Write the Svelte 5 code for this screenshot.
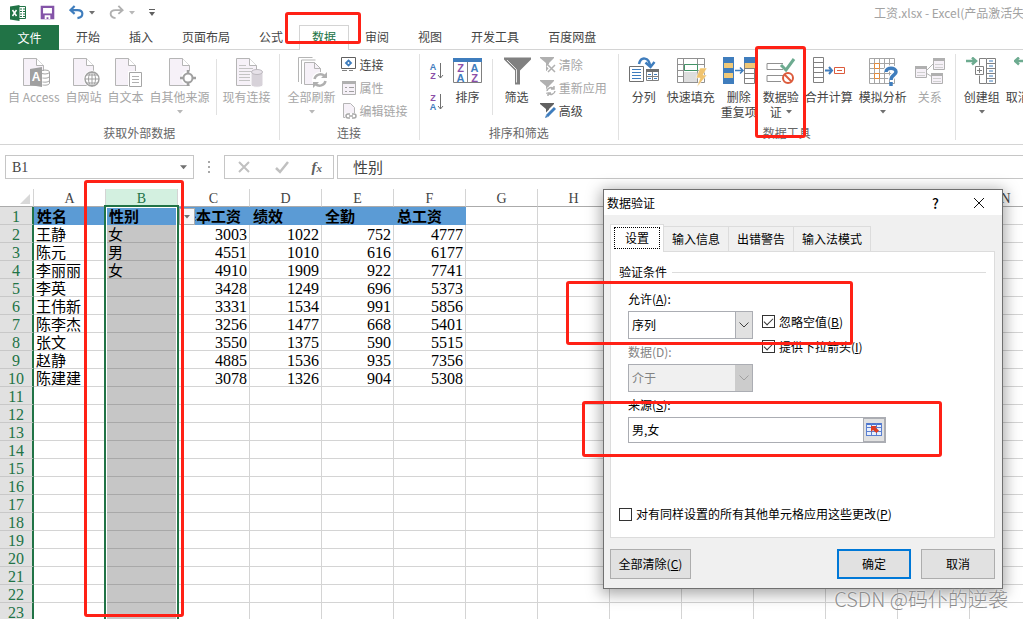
<script lang="ts">
	type Big = { icon: string; label: string; second?: string; arrow?: boolean; off?: boolean };

	const tabs = ['开始', '插入', '页面布局', '公式', '数据', '审阅', '视图', '开发工具', '百度网盘'];
	const columns = 'ABCDEFGHIJKLMN'.split('');
	const titles = ['姓名', '性别', '基本工资', '绩效', '全勤', '总工资'];
	const people = [
		['王静', '女', 3003, 1022, 752, 4777],
		['陈元', '男', 4551, 1010, 616, 6177],
		['李丽丽', '女', 4910, 1909, 922, 7741],
		['李英', '', 3428, 1249, 696, 5373],
		['王伟新', '', 3331, 1534, 991, 5856],
		['陈李杰', '', 3256, 1477, 668, 5401],
		['张文', '', 3550, 1375, 590, 5515],
		['赵静', '', 4885, 1536, 935, 7356],
		['陈建建', '', 3078, 1326, 904, 5308],
	];
	const rows = Array.from({ length: 23 }, (_, i) => (i === 0 ? titles : (people[i - 1] ?? [])));

	const external: Big[] = [
		{ icon: 'access', label: '自 Access', off: true },
		{ icon: 'web', label: '自网站', off: true },
		{ icon: 'text', label: '自文本', off: true },
		{ icon: 'other', label: '自其他来源', arrow: true, off: true },
	];
	const tools: Big[] = [
		{ icon: 'split', label: '分列' },
		{ icon: 'flash', label: '快速填充' },
		{ icon: 'dedupe', label: '删除', second: '重复项' },
		{ icon: 'validate', label: '数据验', second: '证', arrow: true },
		{ icon: 'merge', label: '合并计算' },
		{ icon: 'whatif', label: '模拟分析', arrow: true },
		{ icon: 'relation', label: '关系', off: true },
	];

	let activeTab = $state('数据');
	let allow = $state('序列');
	let source = $state('男,女');
	let ignoreBlank = $state(true);
	let dropdown = $state(true);
	let applyAll = $state(false);
</script>

{#snippet doc()}
	<path d="M5.5 1.5h13l7 7v20h-20z" fill="#f6f1f8" stroke="#b5b5b5" />
	<path d="M18.5 1.5v7h7" fill="#fff" stroke="#b5b5b5" />
{/snippet}

{#snippet icon(name: string)}
	<svg class="icon" viewBox="0 0 32 32" fill="none" aria-hidden="true">
		{#if name === 'access'}
			{@render doc()}
			<path d="M22 14h7c3 0 3 2 3 2v11c0 2-3 2-3 2h-7z" fill="#fff" />
			<ellipse cx="27" cy="15" rx="4.5" ry="2" stroke="#a6a6a6" />
			<path d="M31.5 15v11c0 2-4 2.500-7 2M31.500 19c0 2-4 2.500-7 2M31.500 23c0 2-4 2.500-7 2" stroke="#a6a6a6" />
			<path d="M12 12l12-2v20l-12-2z" fill="#a0a0a0" />
			<text x="18" y="24" text-anchor="middle" class="glyph" fill="#fff">A</text>
		{:else if name === 'web'}
			{@render doc()}
			<circle cx="24" cy="22" r="8.500" fill="#fff" />
			<circle cx="24" cy="22" r="7" stroke="#a0a0a0" stroke-width="1.400" />
			<ellipse cx="24" cy="22" rx="3.500" ry="7" stroke="#a0a0a0" />
			<path d="M17 22h14M24 15v14M18.500 18h11M18.500 26h11" stroke="#a0a0a0" />
		{:else if name === 'text'}
			{@render doc()}
			<path d="M18 14h14v18h-14z" fill="#fff" />
			<path d="M19.500 15.500h12v14h-12z" fill="#fff" stroke="#a6a6a6" />
			<path d="M22 19.500h7M22 22.500h7M22 25.500h7" stroke="#b0b0b0" />
		{:else if name === 'other'}
			{@render doc()}
			<circle cx="24" cy="21" r="7" fill="#fff" />
			<circle cx="24" cy="21" r="4.500" fill="#fff" stroke="#a0a0a0" stroke-width="2" />
			<path d="M24 13v4M24 25v4M16 21h4M28 21h4" stroke="#a0a0a0" stroke-width="2.500" />
		{:else if name === 'existing'}
			{@render doc()}
			<path d="M8 8.500h7M8 11.500h14M8 14.500h14M8 17.500h11M8 20.500h11M8 23.500h11" stroke="#c4c4c4" />
			<path d="M20 15v13c0 3 12 3 12 0v-13z" fill="#d7d2d9" stroke="#fff" />
			<ellipse cx="26" cy="15" rx="5.500" ry="2.500" fill="#e7e2e9" stroke="#bdb9bf" />
		{:else if name === 'refresh'}
			<path d="M2.500 25v-24.500h14M5.500 27v-24h14" stroke="#b5b5b5" />
			<path d="M8.500 5.500h10l6 6v16h-16z" fill="#f6f1f8" stroke="#b5b5b5" />
			<path d="M18.500 5.500v6h6" stroke="#b5b5b5" />
			<circle cx="24" cy="23" r="8" fill="#fff" />
			<path d="M18.500 22a6 6 0 0 1 10-3M29.500 24a6 6 0 0 1-10 3" stroke="#b0b0b0" stroke-width="2.500" />
			<path d="M31 15v6h-6zM17 31v-6h6z" fill="#b0b0b0" />
		{:else if name === 'sort'}
			<path d="M1.500 2.500h28v23h-28z" fill="#fff" stroke="#808080" />
			<path d="M1 1h29v4h-29z" fill="#3f7dbd" />
			<path d="M15.500 5v20" stroke="#808080" />
			<g class="glyph small" text-anchor="middle">
				<text x="8.500" y="14.500" fill="#8b4fa8">Z</text>
				<text x="8.500" y="24.500" fill="#3f7dbd">A</text>
				<text x="22.500" y="14.500" fill="#3f7dbd">A</text>
				<text x="22.500" y="24.500" fill="#8b4fa8">Z</text>
			</g>
		{:else if name === 'filter'}
			<path d="M3 0.500h27v2l-11 11v14h-5v-14l-11-11z" fill="#808080" />
			<path d="M6 3l9.500 9.500v13" stroke="#e8e8e8" />
		{:else if name === 'split'}
			<path d="M11 7c2-8 10-7 11 2" stroke="#3f7dbd" stroke-width="2.500" />
			<path d="M17.500 5.500l5 4.500 4-5" stroke="#3f7dbd" stroke-width="2.500" />
			<path d="M1.500 9.500h14v15h-14z" fill="#fff" stroke="#707070" />
			<path d="M4 12.500h9M4 15.500h9M4 18.500h9M4 21.500h9" stroke="#3f7dbd" />
			<path d="M18.500 12.500h12v11h-12zM24.500 15v8M18 19.500h13" stroke="#808080" fill="#fff" />
			<path d="M18 12h13v3h-13z" fill="#707070" />
			<path d="M20 17.500h3M26 17.500h3M20 21.500h3M26 21.500h3" stroke="#3f7dbd" />
		{:else if name === 'flash'}
			<path d="M2.500 1.500h27v24h-27zM2 7.500h28M2 13.500h28M2 19.500h28M8.500 1v24M22.500 1v24" stroke="#909090" />
			<path d="M9.500 7.500h13v6h-13z" fill="#fff" stroke="#439467" />
			<path d="M9 15h13v10h-13z" fill="#dedede" />
			<path d="M25 11h7l-4 7h4l-10 12 3-9h-4z" fill="#f0c36d" stroke="#fff" stroke-width=".5" />
		{:else if name === 'dedupe'}
			<path d="M0 0h11v27h-11z" fill="#3f7dbd" />
			<path d="M1 6h9v5h-9zM1 16h9v5h-9z" fill="#f0c978" />
			<path d="M12 13.500h8M17 10.500l3 3-3 3" stroke="#3f7dbd" stroke-width="1.500" />
			<path d="M21.500 0.500h10v26h-10zM21 11.500h11M21 16.500h11M21 21.500h11" stroke="#808080" fill="#fff" />
			<path d="M21 0h11v6h-11z" fill="#3f7dbd" />
			<path d="M22 6h10v5h-10z" fill="#f0c978" />
		{:else if name === 'validate'}
			<path d="M18 6.500h-16v6h16M18 18.500h-16v6h14" stroke="#909090" />
			<path d="M16 8l5 5 8-11" stroke="#6dab90" stroke-width="3" />
			<circle cx="23" cy="21" r="5" stroke="#dc5b3c" stroke-width="2" />
			<path d="M19.500 17.500l7 7" stroke="#dc5b3c" stroke-width="2" />
		{:else if name === 'merge'}
			<path d="M.500 .500h10v25h-10zM0 5.500h11M0 10.500h11M0 15.500h11M0 20.500h11" stroke="#808080" />
			<path d="M12 13.500h7M16 10l3 3.500-3 3.500" stroke="#3f7dbd" stroke-width="2" />
			<path d="M21.500 10.500h10v6h-10zM24 13.500h5" stroke="#dc5b3c" />
		{:else if name === 'whatif'}
			<path d="M2.500 1.500h25v25h-25zM2 6.500h26M2 11.500h26M2 16.500h26M2 21.500h26M7.500 1v25M12.500 1v25M17.500 1v25M22.500 1v25" stroke="#a5a5a5" />
			<path d="M7.500 6.500h5v5h-5zM7.500 16.500h5v5h-5z" fill="#fff" stroke="#e28a3b" />
			<path d="M19 15c0-5 10-5 10 0 0 3-5 3-5 8" stroke="#fff" stroke-width="6" />
			<path d="M19 15c0-5 10-5 10 0 0 3-5 3-5 8M24 25v4" stroke="#3f7dbd" stroke-width="3.500" />
		{:else if name === 'relation'}
			<path d="M12 14l8-8M12 16l8 5" stroke="#b5b5b5" />
			<path d="M1.500 9.500h11v11h-11zM19.500 1.500h11v11h-11zM17.500 17.500h11v9h-11z" fill="#f6f1f8" stroke="#b0b0b0" />
			<path d="M1 9h12v3h-12zM19 1h12v3h-12zM17 16h12v3h-12z" fill="#b0b0b0" />
			<path d="M3 15.500h8M3 18.500h8M21 7.500h8M21 10.500h8M19 21.500h8M19 24.500h8" stroke="#d0d0d0" />
		{:else if name === 'group'}
			<path d="M0 4h10M6 .500l4 3.500-4 3.500" stroke="#6dab90" stroke-width="2.500" />
			<path d="M20 1.500h-6.500v7M20 26.500h-6.500v-8M9.500 9.500h8v8h-8zM11 13.500h5M13.500 11v5" stroke="#808080" />
			<path d="M20.500 1.500h9v25h-9zM20 6.500h10M20 11.500h10M20 16.500h10M20 21.500h10" stroke="#808080" />
			<path d="M23 4h4M23 9h4M23 14h4M23 19h4M23 24h4" stroke="#3f7dbd" />
		{:else if name === 'ungroup'}
			<path d="M10 4h-9M5 .500l-4 3.500 4 3.500" stroke="#6dab90" stroke-width="2.500" />
			<path d="M9.500 10.500h8v8h-8z" stroke="#dc5b3c" />
		{/if}
	</svg>
{/snippet}

{#snippet smallIcon(name: string)}
	<svg class="small-icon" viewBox="0 0 16 16" fill="none" aria-hidden="true">
		{#if name === 'link'}
			<path d="M.500 .500h14v11h-14z" stroke="#606060" />
			<path d="M7.500 3.500l2.500 2.500-2.500 2.500-2.500-2.500z" stroke="#3f7dbd" stroke-width="1.800" />
			<path d="M1 13.500h5M8 13.500h4" stroke="#808080" />
		{:else if name === 'props'}
			<path d="M1.500 1.500h13v13h-13z" fill="#f6f1f8" stroke="#b0b0b0" />
			<path d="M1 1h14v3h-14z" fill="#b0b0b0" />
			<path d="M4 7.500h2M8 7.500h5M4 11.500h2M8 11.500h5" stroke="#a0a0a0" />
		{:else if name === 'edit'}
			<path d="M2.500 .500h7l4 4v10h-11z" fill="#f6f1f8" stroke="#b5b5b5" />
			<path d="M4 10h12v6h-12z" fill="#fff" />
			<path d="M9 11h-2a2 2 0 0 0 0 4h2M11 11h2a2 2 0 0 1 0 4h-2M8 13h4" stroke="#a8a8a8" stroke-width="1.500" />
		{:else if name === 'asc' || name === 'desc'}
			<g class="glyph tiny" text-anchor="middle">
				<text x="4" y="7" fill={name === 'asc' ? '#3f7dbd' : '#8b4fa8'}>{name === 'asc' ? 'A' : 'Z'}</text>
				<text x="4" y="15.500" fill={name === 'asc' ? '#8b4fa8' : '#3f7dbd'}>{name === 'asc' ? 'Z' : 'A'}</text>
			</g>
			<path d="M11.500 0v15M9 12l2.500 3 2.500-3" stroke="#707070" />
		{:else}
			<path d="M0 0h14v1l-5 5v8h-3v-8l-6-5z" fill={name === 'advanced' ? '#606060' : '#b0b0b0'} />
			{#if name === 'clear'}
				<path d="M8 8l7 7M15 8l-7 7" stroke="#fff" stroke-width="4" />
				<path d="M8 8l7 7M15 8l-7 7" stroke="#b0b0b0" stroke-width="1.500" />
			{:else if name === 'reapply'}
				<circle cx="11" cy="11" r="5" fill="#fff" />
				<path d="M7 11a4 4 0 0 1 7-2M15 11a4 4 0 0 1-7 2M14 6v3h-3M8 16v-3h3" stroke="#b0b0b0" stroke-width="1.500" />
			{:else}
				<path d="M14 5l-9 9" stroke="#fff" stroke-width="5" />
				<path d="M15 5l-8 8" stroke="#3f7dbd" stroke-width="3" />
				<path d="M5 15l1-3 2 2z" fill="#3f7dbd" />
			{/if}
		{/if}
	</svg>
{/snippet}

{#snippet caret()}
	<svg class="caret" viewBox="0 0 6 4" aria-hidden="true"><path d="M0 0h6l-3 3.500z" /></svg>
{/snippet}

{#snippet big(b: Big)}
	<button class="big" disabled={b.off}>
		{@render icon(b.icon)}
		<span>{b.label}</span>
		{#if b.second || b.arrow}
			<span class="line">
				{b.second ?? ''}
				{#if b.arrow}{@render caret()}{/if}
			</span>
		{/if}
	</button>
{/snippet}

{#snippet small(name: string, label: string, off = false)}
	<button class="small-button" disabled={off}>
		{@render smallIcon(name)}
		<span>{label}</span>
	</button>
{/snippet}

<div class="app">
	<header class="titlebar">
		<svg class="excel" viewBox="0 0 16 16" aria-hidden="true">
			<path d="M8 1.500h7.500v12h-7.500" fill="#fff" stroke="#217346" />
			<path d="M10 4h2M13 4h2M10 6.500h2M13 6.500h2M10 9h2M13 9h2M10 11.500h2M13 11.500h2" stroke="#217346" />
			<path d="M0 1.500l9.500-1.500v16l-9.500-1.500z" fill="#217346" />
			<path d="M2.500 5l4 6M6.500 5l-4 6" stroke="#fff" stroke-width="1.500" />
		</svg>
		<button class="quick" aria-label="保存">
			<svg viewBox="0 0 16 16" fill="none">
				<path d="M2 2h12v12h-12z" stroke="#8454a8" stroke-width="2.500" />
				<path d="M2 9h12v5h-12z" fill="#8454a8" />
				<path d="M5 11h6v4h-2v-2h-2v2h-2z" fill="#fff" />
			</svg>
		</button>
		<button class="quick" aria-label="撤消">
			<svg viewBox="0 0 16 16" fill="none">
				<path d="M2 5.500h7c7 0 7 7.500 0 8.500M6 1l-4.500 4.500 4.500 4" stroke="#3f7dbd" stroke-width="2.300" />
			</svg>
			{@render caret()}
		</button>
		<button class="quick faded" aria-label="恢复">
			<svg viewBox="0 0 16 16" fill="none">
				<path d="M14 5.500h-7c-7 0-7 7.500 0 8.500M10 1l4.500 4.500-4.500 4" stroke="#b0b0b0" stroke-width="2" />
			</svg>
			{@render caret()}
		</button>
		<button class="quick" aria-label="自定义快速访问工具栏">
			<svg class="customize" viewBox="0 0 6 8"><path d="M0 0h6v1h-6zM0 3h6l-3 4z" fill="#606060" /></svg>
		</button>
		<h1>工资.xlsx - Excel(产品激活失败)</h1>
	</header>

	<nav class="tabs">
		<button class="file">文件</button>
		{#each tabs as tab}
			<button class={['tab', { active: tab === activeTab }]} onclick={() => (activeTab = tab)}>{tab}</button>
		{/each}
	</nav>

	<section class="ribbon">
		<div class="group">
			<div class="items">
				{#each external as b}{@render big(b)}{/each}
				<span class="separator"></span>
				{@render big({ icon: 'existing', label: '现有连接', off: true })}
			</div>
			<p>获取外部数据</p>
		</div>
		<div class="group">
			<div class="items">
				{@render big({ icon: 'refresh', label: '全部刷新', arrow: true, off: true })}
				<div class="stack">
					{@render small('link', '连接')}
					{@render small('props', '属性', true)}
					{@render small('edit', '编辑链接', true)}
				</div>
			</div>
			<p>连接</p>
		</div>
		<div class="group">
			<div class="items sorting">
				<div class="orders">
					<button aria-label="升序">{@render smallIcon('asc')}</button>
					<button aria-label="降序">{@render smallIcon('desc')}</button>
				</div>
				{@render big({ icon: 'sort', label: '排序' })}
				<span class="separator"></span>
				{@render big({ icon: 'filter', label: '筛选' })}
				<div class="stack">
					{@render small('clear', '清除', true)}
					{@render small('reapply', '重新应用', true)}
					{@render small('advanced', '高级')}
				</div>
			</div>
			<p>排序和筛选</p>
		</div>
		<div class="group">
			<div class="items">
				{#each tools as b}{@render big(b)}{/each}
			</div>
			<p>数据工具</p>
		</div>
		<div class="group">
			<div class="items">
				{@render big({ icon: 'group', label: '创建组', arrow: true })}
				{@render big({ icon: 'ungroup', label: '取消组合', arrow: true })}
			</div>
		</div>
	</section>

	<section class="formula-bar">
		<div class="name-box">
			<input aria-label="名称框" value="B1" />
			{@render caret()}
		</div>
		<svg class="grip" viewBox="0 0 3 12" aria-hidden="true">
			<path d="M0 0h2v2h-2zM0 5h2v2h-2zM0 10h2v2h-2z" fill="#a8a8a8" />
		</svg>
		<div class="entry">
			<button aria-label="取消输入">
				<svg viewBox="0 0 16 16" fill="none"><path d="M3 3l10 10M13 3l-10 10" stroke="#c0c0c0" stroke-width="2" /></svg>
			</button>
			<button aria-label="输入">
				<svg viewBox="0 0 16 16" fill="none"><path d="M2 9l4 4 8-10" stroke="#c0c0c0" stroke-width="2.500" /></svg>
			</button>
			<button class="fx">f<sub>x</sub></button>
		</div>
		<input class="formula" aria-label="编辑栏" value="性别" />
	</section>

	<section class="sheet">
		<table>
			<thead>
				<tr>
					<th class="corner"><svg viewBox="0 0 12 12"><path d="M11 1v10h-10z" fill="#d8d8d8" /></svg></th>
					{#each columns as c}
						<th class={{ picked: c === 'B' }}>{c}</th>
					{/each}
				</tr>
			</thead>
			<tbody>
				{#each rows as row, r}
					<tr>
						<th>{r + 1}</th>
						{#each columns as _, c}
							<td
								class={{
									title: r === 0 && c < 6,
									number: typeof row[c] === 'number',
									selected: r > 0 && c === 1,
								}}>{row[c] ?? ''}</td
							>
						{/each}
					</tr>
				{/each}
			</tbody>
		</table>
		<div class="selection"></div>
		<button class="list-arrow" aria-label="选择性别">{@render caret()}</button>
	</section>

	<div class="dialog" role="dialog" aria-labelledby="dialog-title">
		<header>
			<h2 id="dialog-title">数据验证</h2>
			<button class="help" aria-label="帮助">?</button>
			<button aria-label="关闭">
				<svg viewBox="0 0 12 12"><path d="M1 1l10 10M11 1l-10 10" stroke="#111" /></svg>
			</button>
		</header>
		<div class="body">
			<div class="pages">
				<button class="current"><span>设置</span></button>
				<button>输入信息</button>
				<button>出错警告</button>
				<button>输入法模式</button>
			</div>
			<div class="panel">
				<h3>验证条件</h3>
				<div class="fields">
					<div class="column">
						<label for="allow">允许(<u>A</u>):</label>
						<div class="select">
							<select id="allow" bind:value={allow}>
								<option>任何值</option>
								<option>序列</option>
							</select>
							<svg viewBox="0 0 10 6"><path d="M.500 .500l4.500 4.500 4.500-4.500" /></svg>
						</div>
						<label class="muted" for="data">数据(D):</label>
						<div class="select muted">
							<select id="data" disabled><option>介于</option></select>
							<svg viewBox="0 0 10 6"><path d="M.500 .500l4.500 4.500 4.500-4.500" /></svg>
						</div>
						<label for="source">来源(<u>S</u>):</label>
					</div>
					<div class="checks">
						<label class="check"><input type="checkbox" bind:checked={ignoreBlank} />忽略空值(<u>B</u>)</label>
						<label class="check"><input type="checkbox" bind:checked={dropdown} />提供下拉箭头(<u>I</u>)</label>
					</div>
				</div>
				<div class="source">
					<input id="source" bind:value={source} />
					<button aria-label="选择区域">
						<svg viewBox="0 0 16 14" fill="none">
							<path d="M0 0h16v13h-16z" fill="#e8effc" />
							<path d="M0 1h16" stroke="#4d75cd" stroke-width="2" />
							<path d="M0 4.500h16M0 8.500h16M0 12.500h16M.500 0v13M5.500 0v13M10.500 0v13M15.500 0v13" stroke="#5a7fd0" />
							<path d="M5 3h6l-1.500 1.500 3.500 3-2.500 2.500-3.500-3-2 2z" fill="#dc3b22" />
						</svg>
					</button>
				</div>
				<label class="check apply">
					<input type="checkbox" bind:checked={applyAll} />对有同样设置的所有其他单元格应用这些更改(<u>P</u>)
				</label>
			</div>
			<footer>
				<button class="clear">全部清除(<u>C</u>)</button>
				<button class="primary">确定</button>
				<button>取消</button>
			</footer>
		</div>
	</div>

	<div class="mark mark-tab"></div>
	<div class="mark mark-tool"></div>
	<div class="mark mark-column"></div>
	<div class="mark mark-allow"></div>
	<div class="mark mark-source"></div>
	<div class="watermark">CSDN @码仆的逆袭</div>
</div>

<style>
	:global(body) {
		margin: 0;
	}

	.app {
		--green: #217346;
		--line: #d4d4d4;
		--ui: 'Noto Sans CJK SC', 'Liberation Sans', sans-serif;
		--cell: 'Liberation Serif', 'Noto Sans CJK SC', serif;

		position: relative;
		display: flex;
		flex-direction: column;
		height: 100vh;
		overflow: hidden;
		background: #fff;
		color: #444;
		font: 12px/16px var(--ui);
	}

	.app * {
		box-sizing: border-box;
	}

	button,
	input,
	select {
		margin: 0;
		padding: 0;
		border: 0;
		border-radius: 0;
		outline: 0;
		background: none;
		color: inherit;
		font: inherit;
	}

	h1,
	h2,
	h3,
	p {
		margin: 0;
		font: inherit;
	}

	svg {
		display: block;
		flex: none;
	}

	.caret {
		width: 6px;
		height: 4px;
		fill: #707070;
	}

	/* Title bar */
	.titlebar {
		display: flex;
		flex: none;
		align-items: center;
		gap: 14px;
		height: 25px;
		padding-left: 10px;
	}

	.excel {
		width: 16px;
		height: 16px;
	}

	.quick {
		display: flex;
		align-items: center;
		gap: 5px;
	}

	.quick svg:first-child {
		width: 15px;
		height: 15px;
	}

	.quick .customize:first-child {
		width: 6px;
		height: 8px;
	}

	.faded .caret {
		fill: #b8b8b8;
	}

	.titlebar h1 {
		width: 149px;
		margin-left: auto;
		overflow: hidden;
		color: #a2a2a2;
		white-space: nowrap;
	}

	/* Tabs */
	.tabs {
		display: flex;
		flex: none;
		gap: 3px;
		height: 25px;
		padding-bottom: 1px;
		border-bottom: 1px solid var(--line);
	}

	.file {
		width: 59px;
		height: 25px;
		margin-right: 1px;
		background: var(--green);
		color: #fff;
	}

	.tab {
		height: 25px;
		padding: 0 12px 2px;
		border: 1px solid transparent;
		border-bottom: 0;
	}

	.tab.active {
		border-color: var(--line);
		background: #fff;
		color: var(--green);
	}

	/* Ribbon */
	.ribbon {
		display: flex;
		flex: none;
		height: 95px;
		border-bottom: 1px solid var(--line);
	}

	.group {
		display: flex;
		flex: none;
		flex-direction: column;
		justify-content: space-between;
		margin: 4px 0;
		padding: 0 5px;
		border-right: 1px solid #e1e1e1;
	}

	.group p {
		color: #666;
		line-height: 14px;
		text-align: center;
	}

	.items {
		display: flex;
		padding-top: 3px;
	}

	.sorting {
		gap: 1px;
	}

	.big {
		display: flex;
		flex-direction: column;
		align-items: center;
		min-width: 40px;
		padding: 0 3px;
		line-height: 15px;
		white-space: nowrap;
	}

	.big:disabled,
	.small-button:disabled {
		color: #a6a6a6;
	}

	.big:disabled .caret {
		fill: #b8b8b8;
	}

	.icon {
		width: 32px;
		height: 32px;
	}

	.glyph {
		font: bold 12px 'Liberation Sans', sans-serif;
	}

	.glyph.small {
		font-size: 11px;
	}

	.glyph.tiny {
		font-size: 9px;
	}

	.line {
		display: flex;
		align-items: center;
		gap: 4px;
		height: 15px;
	}

	.separator {
		width: 1px;
		height: 56px;
		margin: 2px 3px 0;
		background: #e1e1e1;
	}

	.stack {
		display: flex;
		flex-direction: column;
		padding: 0 6px 0 2px;
	}

	.small-button {
		display: flex;
		align-items: center;
		gap: 3px;
		height: 23px;
		padding-bottom: 8px;
		white-space: nowrap;
	}

	.small-icon {
		width: 16px;
		height: 16px;
	}

	.orders {
		display: flex;
		flex-direction: column;
		gap: 15px;
		padding: 6px 2px 0 4px;
	}

	/* Formula bar */
	.formula-bar {
		display: flex;
		flex: none;
		align-items: center;
		padding: 10px 0;
		font: 14px/22px var(--cell);
	}

	.formula-bar > * {
		height: 24px;
	}

	.name-box {
		display: flex;
		align-items: center;
		width: 189px;
		margin-left: 5px;
		padding: 0 6px;
		border: 1px solid #c6c6c6;
	}

	.name-box input {
		flex: 1;
		min-width: 0;
		padding-top: 2px;
	}

	.name-box .caret {
		width: 7px;
		height: 5px;
	}

	.formula-bar .grip {
		width: 3px;
		height: 12px;
		margin: 0 13px 0 14px;
	}

	.entry {
		display: flex;
		align-items: center;
		justify-content: space-between;
		width: 110px;
		margin-right: 3px;
		padding: 0 11px;
		border: 1px solid #c6c6c6;
	}

	.entry svg {
		width: 16px;
		height: 16px;
	}

	.fx {
		color: #606060;
		font: italic bold 15px/20px 'Liberation Serif', serif;
	}

	.fx sub {
		font-size: 11px;
		line-height: 1px;
		vertical-align: baseline;
	}

	.formula {
		flex: 1;
		min-width: 0;
		padding: 0 0 2px 15px;
		border: 1px solid #c6c6c6;
		border-right: 0;
		font-size: 15px;
	}

	/* Sheet */
	.sheet {
		position: relative;
		flex: 1;
		min-height: 0;
		overflow: hidden;
	}

	table {
		width: 1042px;
		border-collapse: separate;
		border-spacing: 0;
		table-layout: fixed;
		font: 15px/14px var(--cell);
	}

	th,
	td {
		height: 18px;
		padding: 3px 2px 0;
		overflow: hidden;
		border-right: 1px solid var(--line);
		border-bottom: 1px solid var(--line);
		white-space: nowrap;
	}

	thead th {
		border-bottom-color: #ababab;
		font-size: 14px;
		font-weight: normal;
	}

	thead .picked {
		background: #d3f0e0;
		color: var(--green);
	}

	.corner {
		width: 34px;
	}

	.corner svg {
		width: 12px;
		height: 12px;
		margin-left: auto;
	}

	tbody th {
		border-right: 2px solid var(--green);
		border-bottom-color: #c8c8c8;
		background: #e1e1e1;
		color: var(--green);
		font-size: 16px;
		font-weight: normal;
	}

	td {
		color: #000;
	}

	.number {
		font-size: 16px;
		text-align: right;
	}

	.title {
		padding: 3px 3px 0;
		border-color: #5b9bd5;
		background: #5b9bd5;
		font-weight: bold;
	}

	.selected {
		border-bottom-color: #a8a8a8;
		background: #c6c6c6;
	}

	.selection {
		position: absolute;
		top: 16px;
		left: 104px;
		width: 75px;
		height: 100%;
		border: 2px solid var(--green);
		box-shadow: inset 0 0 0 1px #fff;
	}

	.list-arrow {
		position: absolute;
		top: 19px;
		left: 179px;
		display: grid;
		place-items: center;
		width: 16px;
		height: 17px;
		border: 1px solid #ababab;
		background: #f8f8f8;
	}

	/* Dialog */
	.dialog {
		position: absolute;
		top: 189px;
		left: 603px;
		width: 400px;
		border: 1px solid #707070;
		background: #f0f0f0;
		box-shadow: 0 3px 14px 2px rgb(0 0 0 / 35%);
		color: #000;
	}

	.dialog header {
		display: flex;
		align-items: center;
		gap: 34px;
		height: 25px;
		padding: 0 17px 0 3px;
		background: #fff;
	}

	.dialog h2 {
		flex: 1;
	}

	.dialog header svg {
		width: 12px;
		height: 12px;
	}

	.help {
		font-size: 14px;
		font-weight: 500;
	}

	.body {
		padding: 9px 7px 9px 6px;
	}

	.pages {
		display: flex;
		align-items: flex-end;
	}

	.pages button {
		height: 25px;
		padding: 0 8px;
		border: 1px solid #dcdcdc;
		border-bottom: 0;
		border-left: 0;
	}

	.pages .current {
		height: 28px;
		margin-bottom: -1px;
		padding: 2px 3px 3px;
		border-left: 1px solid #dcdcdc;
		background: #fff;
	}

	.current span {
		display: block;
		padding: 2px 10px;
		border: 1px dotted #000;
	}

	.panel {
		padding: 12px 8px 15px;
		border: 1px solid #dcdcdc;
		background: #fff;
	}

	.panel h3 {
		display: flex;
		align-items: center;
		gap: 5px;
		margin-bottom: 11px;
	}

	.panel h3::after {
		content: '';
		flex: 1;
		border-top: 1px solid #dcdcdc;
	}

	.fields {
		display: flex;
		gap: 9px;
		padding-left: 9px;
	}

	.column {
		display: flex;
		flex-direction: column;
		width: 125px;
	}

	.muted {
		color: #838383;
	}

	.select {
		position: relative;
		margin: 4px 0 5px;
	}

	.select select {
		display: block;
		width: 100%;
		height: 28px;
		padding: 0 20px 0 3px;
		border: 1px solid #abadb3;
		appearance: none;
		background: linear-gradient(90deg, #abadb3 1px, #e1e1e1 1px) right / 17px 100% no-repeat #fff;
		opacity: 1;
	}

	.select.muted select {
		background: linear-gradient(90deg, #ccc, #ccc) right / 17px 100% no-repeat #f0f0f0;
	}

	.select svg {
		position: absolute;
		top: 11px;
		right: 4px;
		width: 10px;
		height: 6px;
		fill: none;
		stroke: #404040;
		pointer-events: none;
	}

	.select.muted svg {
		stroke: #a0a0a0;
	}

	.checks {
		padding-top: 18px;
	}

	.check {
		display: flex;
		align-items: center;
		height: 25px;
		white-space: nowrap;
	}

	.check input {
		display: grid;
		flex: none;
		place-items: center;
		width: 13px;
		height: 13px;
		margin-right: 4px;
		border: 1px solid #333;
		appearance: none;
		background: #fff;
	}

	.check input:checked::before {
		content: '';
		width: 8px;
		height: 4px;
		margin-bottom: 3px;
		border: solid #333;
		border-width: 0 0 1px 1px;
		transform: rotate(-45deg);
	}

	.source {
		display: flex;
		width: 258px;
		height: 26px;
		margin: 4px 0 0 9px;
		border: 1px solid #abadb3;
	}

	.source input {
		flex: 1;
		min-width: 0;
		padding-left: 3px;
	}

	.source button {
		display: grid;
		place-items: center;
		width: 22px;
		border: 1px solid #abadb3;
		background: #e1e1e1;
	}

	.source svg {
		width: 16px;
		height: 14px;
	}

	.apply {
		height: 16px;
		margin-top: 63px;
	}

	.dialog footer {
		display: flex;
		gap: 10px;
		padding-top: 11px;
	}

	footer button {
		width: 74px;
		height: 30px;
		border: 1px solid #adadad;
		background: #e1e1e1;
	}

	footer .clear {
		width: 81px;
		margin-right: auto;
	}

	footer .primary {
		border: 2px solid #0078d7;
	}

	/* Annotations */
	.mark {
		position: absolute;
		border: 3px solid #ff2116;
		border-radius: 3px;
		pointer-events: none;
	}

	.mark-tab {
		top: 12px;
		left: 285px;
		width: 76px;
		height: 32px;
	}

	.mark-tool {
		top: 46px;
		left: 755px;
		width: 51px;
		height: 92px;
	}

	.mark-column {
		top: 180px;
		left: 84px;
		width: 100px;
		height: 437px;
	}

	.mark-allow {
		top: 281px;
		left: 566px;
		width: 287px;
		height: 64px;
	}

	.mark-source {
		top: 401px;
		left: 582px;
		width: 360px;
		height: 56px;
	}

	.watermark {
		position: absolute;
		right: 15px;
		bottom: 8px;
		color: #8c8c8c;
		font: 20px/24px var(--ui);
		font-weight: 300;
		text-shadow: 0 0 2px #fff;
		white-space: nowrap;
	}
</style>
